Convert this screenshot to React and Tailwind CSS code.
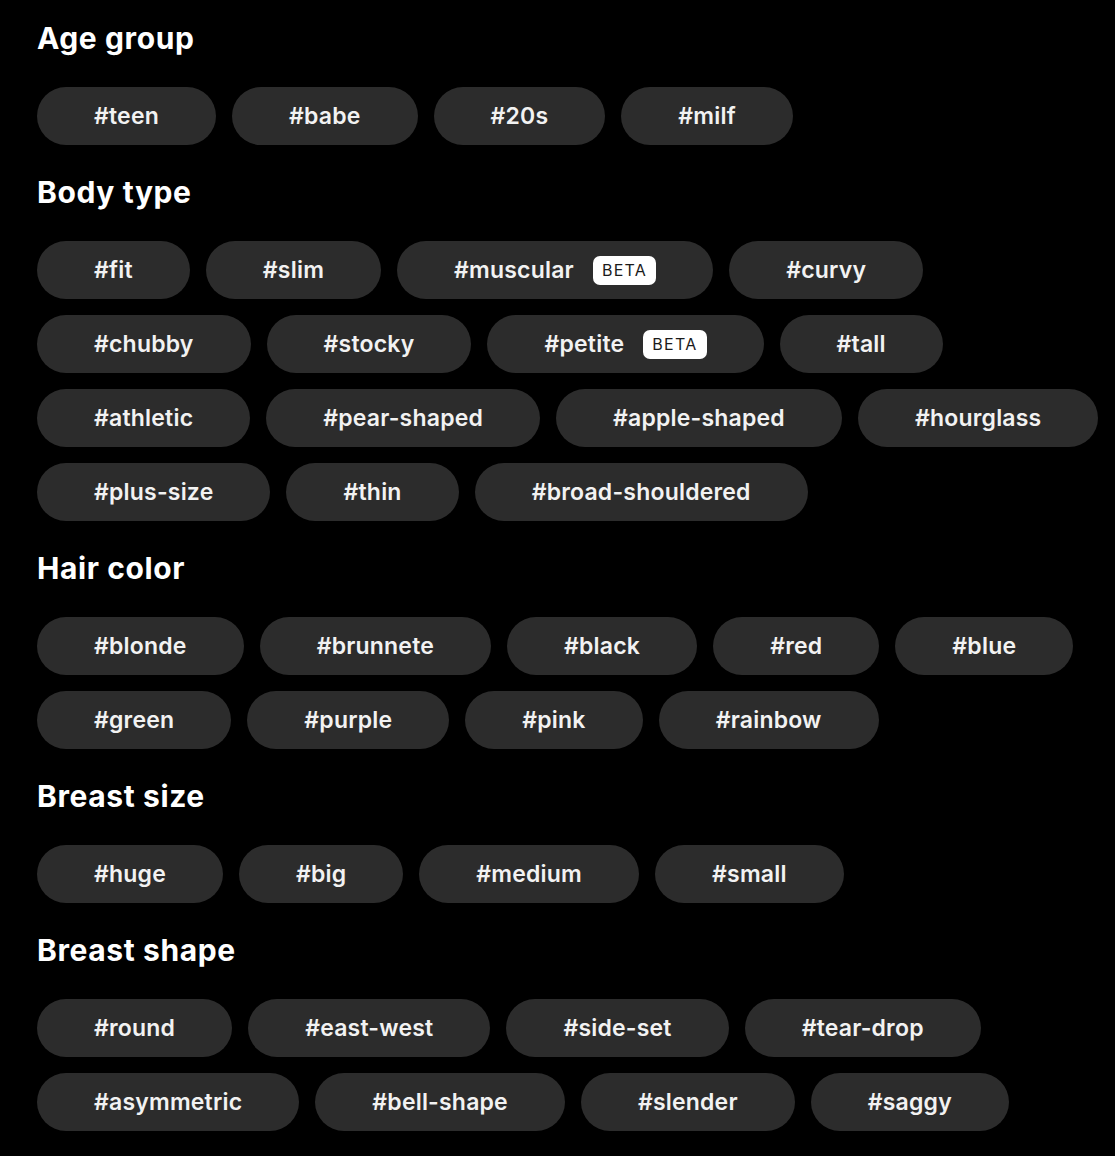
import React from 'react';

const SECTIONS = [
  { title: 'Age group', tags: ['teen', 'babe', '20s', 'milf'] },
  {
    title: 'Body type',
    tags: [
      'fit', 'slim', { name: 'muscular', beta: true }, 'curvy',
      'chubby', 'stocky', { name: 'petite', beta: true }, 'tall',
      'athletic', 'pear-shaped', 'apple-shaped', 'hourglass',
      'plus-size', 'thin', 'broad-shouldered',
    ],
  },
  {
    title: 'Hair color',
    tags: ['blonde', 'brunnete', 'black', 'red', 'blue', 'green', 'purple', 'pink', 'rainbow'],
  },
  { title: 'Breast size', tags: ['huge', 'big', 'medium', 'small'] },
  {
    title: 'Breast shape',
    tags: ['round', 'east-west', 'side-set', 'tear-drop', 'asymmetric', 'bell-shape', 'slender', 'saggy'],
  },
];

const Tag = ({ tag }) => {
  const name = typeof tag === 'string' ? tag : tag.name;
  const beta = typeof tag !== 'string' && tag.beta;
  return (
    <button className="h-[58px] px-[57px] rounded-full bg-[#2c2c2c] text-[#f2f2f2] text-[23px] tracking-[0.2px] font-semibold flex items-center whitespace-nowrap">
      #{name}
      {beta && (
        <span className="ml-[19px] h-[29px] px-[9px] rounded-[7px] bg-white text-[#1a1a1a] text-[16px] font-normal tracking-[0.08em] flex items-center">
          BETA
        </span>
      )}
    </button>
  );
};

export default function App() {
  return (
    <div
      className="min-h-[1156px] bg-black pl-[37px] pr-[16px] pt-[20px] pb-[24px] flex flex-col gap-[29px]"
      style={{ fontFamily: 'Inter, "Noto Sans", sans-serif' }}
    >
      {SECTIONS.map((section) => (
        <section key={section.title}>
          <h2 className="text-white text-[30px] leading-[36px] tracking-[0.02em] font-bold mb-[31px]">{section.title}</h2>
          <div className="flex flex-wrap gap-[16px]">
            {section.tags.map((tag) => (
              <Tag key={typeof tag === 'string' ? tag : tag.name} tag={tag} />
            ))}
          </div>
        </section>
      ))}
    </div>
  );
}
